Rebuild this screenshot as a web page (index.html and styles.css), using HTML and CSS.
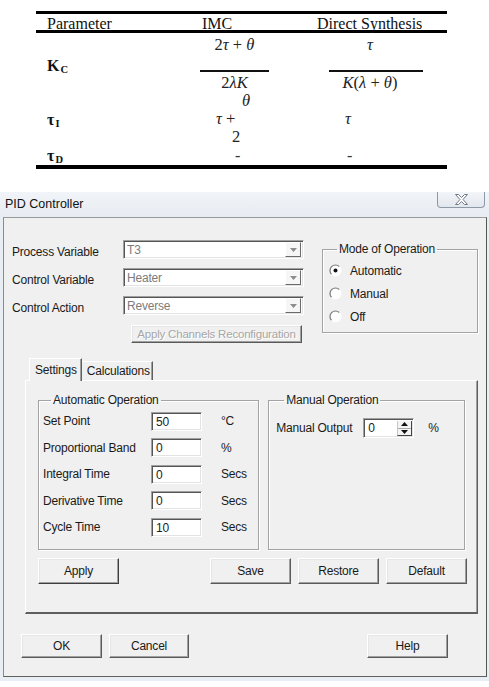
FILE: index.html
```html
<!DOCTYPE html>
<html lang="en">
<head>
<meta charset="utf-8">
<title>PID Controller tuning</title>
<link rel="stylesheet" href="styles.css">
</head>
<body>
<div class="page">

  <section class="tuning">
    <div class="tuning-table">
      <div class="tt-head">
        <div class="c1">Parameter</div>
        <div class="c2">IMC</div>
        <div class="c3">Direct Synthesis</div>
      </div>

      <div class="tt-row kc-row">
        <div class="c1"><span class="sym"><b>K</b><span class="sub">C</span></span></div>
        <div class="c2">
          <div class="frac imc-frac">
            <span class="num">2<i>τ</i> + <i>θ</i></span>
            <span class="bar"></span>
            <span class="den">2<i>λK</i></span>
          </div>
        </div>
        <div class="c3">
          <div class="frac ds-frac">
            <span class="num"><i>τ</i></span>
            <span class="bar"></span>
            <span class="den"><i>K</i>(<i>λ</i> + <i>θ</i>)</span>
          </div>
        </div>
      </div>

      <div class="tt-row ti-row">
        <div class="c1"><span class="sym"><b>τ</b><span class="sub">I</span></span></div>
        <div class="c2 stack">
          <span class="ln theta"><i>θ</i></span>
          <span class="ln tauplus"><i>τ</i> +</span>
          <span class="ln two">2</span>
        </div>
        <div class="c3"><span class="ln tau-ds"><i>τ</i></span></div>
      </div>

      <div class="tt-row td-row">
        <div class="c1"><span class="sym"><b>τ</b><span class="sub">D</span></span></div>
        <div class="c2"><span class="dash imc-dash">-</span></div>
        <div class="c3"><span class="dash ds-dash">-</span></div>
      </div>
    </div>
  </section>

  <div class="dialog">
    <div class="titlebar">
      <span class="title">PID Controller</span>
      <span class="close-btn">
        <svg width="13" height="11" viewBox="0 0 13 11"><path d="M0.5 0.5h3l3 3 3-3h3l-4.5 5 4.5 5h-3l-3-3-3 3h-3l4.5-5z" fill="#fff" stroke="#6f7a88" stroke-width="1" stroke-linejoin="round"/></svg>
      </span>
    </div>

    <div class="client">
      <div class="top-section">
        <div class="channels">
          <span class="lbl">Process Variable</span>
          <div class="combo"><span class="combo-text">T3</span><span class="combo-btn"><svg width="7" height="4" viewBox="0 0 7 4"><path d="M0 0h7L3.5 4z" fill="#8c8c8c"/></svg></span></div>
          <span class="lbl">Control Variable</span>
          <div class="combo"><span class="combo-text">Heater</span><span class="combo-btn"><svg width="7" height="4" viewBox="0 0 7 4"><path d="M0 0h7L3.5 4z" fill="#8c8c8c"/></svg></span></div>
          <span class="lbl">Control Action</span>
          <div class="combo"><span class="combo-text">Reverse</span><span class="combo-btn"><svg width="7" height="4" viewBox="0 0 7 4"><path d="M0 0h7L3.5 4z" fill="#8c8c8c"/></svg></span></div>
          <button class="btn btn-disabled reconfig">Apply Channels Reconfiguration</button>
        </div>

        <fieldset class="group mode-group">
          <legend>Mode of Operation</legend>
          <label class="radio">
            <svg width="13" height="13" viewBox="0 0 13 13"><circle cx="6.5" cy="6.5" r="5" fill="#fff"/><path d="M2.6 10.4A5.5 5.5 0 0 1 10.4 2.6" fill="none" stroke="#7a7a7a" stroke-width="1.2"/><path d="M10.4 2.6A5.5 5.5 0 0 1 2.6 10.4" fill="none" stroke="#fff" stroke-width="1.2"/><circle cx="6.5" cy="6.5" r="2" fill="#111"/></svg>
            <span>Automatic</span>
          </label>
          <label class="radio">
            <svg width="13" height="13" viewBox="0 0 13 13"><circle cx="6.5" cy="6.5" r="5" fill="#fff"/><path d="M2.6 10.4A5.5 5.5 0 0 1 10.4 2.6" fill="none" stroke="#7a7a7a" stroke-width="1.2"/><path d="M10.4 2.6A5.5 5.5 0 0 1 2.6 10.4" fill="none" stroke="#fff" stroke-width="1.2"/></svg>
            <span>Manual</span>
          </label>
          <label class="radio">
            <svg width="13" height="13" viewBox="0 0 13 13"><circle cx="6.5" cy="6.5" r="5" fill="#fff"/><path d="M2.6 10.4A5.5 5.5 0 0 1 10.4 2.6" fill="none" stroke="#7a7a7a" stroke-width="1.2"/><path d="M10.4 2.6A5.5 5.5 0 0 1 2.6 10.4" fill="none" stroke="#fff" stroke-width="1.2"/></svg>
            <span>Off</span>
          </label>
        </fieldset>
      </div>

      <div class="tabs">
        <div class="tab-strip">
          <span class="tab tab-active">Settings</span>
          <span class="tab">Calculations</span>
        </div>
        <div class="tab-panel">
          <div class="groups-row">
            <fieldset class="group auto-group">
              <legend>Automatic Operation</legend>
              <div class="param-grid">
                <span class="lbl">Set Point</span>
                <span class="field">50</span>
                <span class="unit">°C</span>

                <span class="lbl">Proportional Band</span>
                <span class="field">0</span>
                <span class="unit">%</span>

                <span class="lbl">Integral Time</span>
                <span class="field">0</span>
                <span class="unit">Secs</span>

                <span class="lbl">Derivative Time</span>
                <span class="field">0</span>
                <span class="unit">Secs</span>

                <span class="lbl">Cycle Time</span>
                <span class="field">10</span>
                <span class="unit">Secs</span>
              </div>
            </fieldset>

            <fieldset class="group manual-group">
              <legend>Manual Operation</legend>
              <div class="manual-row">
                <span class="lbl manual-lbl">Manual Output</span>
                <span class="spin">
                  <span class="spin-val">0</span>
                  <span class="spin-btns">
                    <span class="spin-half"><svg width="7" height="4" viewBox="0 0 7 4"><path d="M0 4L3.5 0 7 4z" fill="#111"/></svg></span>
                    <span class="spin-half"><svg width="7" height="4" viewBox="0 0 7 4"><path d="M0 0h7L3.5 4z" fill="#111"/></svg></span>
                  </span>
                </span>
                <span class="unit pct">%</span>
              </div>
            </fieldset>
          </div>

          <div class="action-row">
            <button class="btn btn-default">Apply</button>
            <button class="btn push-right">Save</button>
            <button class="btn">Restore</button>
            <button class="btn">Default</button>
          </div>
        </div>
      </div>

      <div class="footer">
        <button class="btn btn-footer">OK</button>
        <button class="btn btn-footer cancel">Cancel</button>
        <button class="btn btn-footer help">Help</button>
      </div>
    </div>
  </div>

</div>
</body>
</html>
```

FILE: styles.css
```css
* {
  box-sizing: border-box;
}

html,
body {
  margin: 0;
  padding: 0;
  background: #fff;
}

.page {
  width: 489px;
  height: 687px;
  overflow: hidden;
}

/* ---------- tuning rules table ---------- */

.tuning {
  padding: 11px 0 23px;
}

.tuning-table {
  width: 411px;
  margin-left: 36px;
  border-top: 3px solid #000;
  border-bottom: 4px solid #000;
  font-family: "Liberation Serif", "Times New Roman", serif;
  font-size: 16px;
  color: #111;
}

.tt-head,
.tt-row {
  display: grid;
  grid-template-columns: 132px 139px 140px;
}

.tt-head {
  height: 19px;
  line-height: 19px;
  border-bottom: 3px solid #000;
}

.tt-head .c1 { padding-left: 11px; }
.tt-head .c2 { padding-left: 34px; }
.tt-head .c3 { padding-left: 10px; }

.sym {
  display: inline-block;
  line-height: 18px;
  font-weight: bold;
}

.sym b {
  font-size: 16px;
}

.sym .sub {
  font-size: 10.5px;
  position: relative;
  top: 2px;
  margin-left: 1px;
}

.tt-row .c1 {
  padding-left: 11px;
}

.tt-row i {
  font-style: italic;
}

/* K_C row */
.kc-row {
  height: 59px;
}

.kc-row .c1 {
  padding-top: 24px;
}

.frac {
  display: flex;
  flex-direction: column;
  line-height: 16px;
  font-size: 16.5px;
  color: #222;
}

.frac .num {
  margin-top: 4px;
  text-align: center;
}

.frac .bar {
  height: 2px;
  margin-top: 17px;
  background: #111;
}

.frac .den {
  margin-top: 3px;
  text-align: center;
}

.imc-frac {
  width: 69px;
  margin-left: 32px;
}

.ds-frac {
  width: 94px;
  margin-left: 22px;
}

.ds-frac .num,
.ds-frac .den {
  padding-right: 12px;
}

/* tau_I row */
.ti-row {
  height: 55px;
}

.ti-row .c1 {
  padding-top: 19px;
}

.stack {
  display: flex;
  flex-direction: column;
}

.ln {
  display: block;
  line-height: 18px;
  font-size: 16.5px;
  color: #222;
}

.theta { padding-left: 74px; }
.tauplus { padding-left: 48px; }
.two { padding-left: 64px; }

.tau-ds {
  padding-top: 18px;
  padding-left: 38px;
}

/* tau_D row */
.td-row {
  height: 18px;
  line-height: 18px;
}

.dash {
  display: block;
  color: #333;
}

.imc-dash { padding-left: 67px; }
.ds-dash { padding-left: 40px; }

/* ---------- dialog window ---------- */

.dialog {
  width: 489px;
  padding: 0 2px 4px 3px;
  background: #e9eef4;
  font-family: "Liberation Sans", Arial, sans-serif;
  font-size: 12px;
  letter-spacing: -0.2px;
  color: #1a1a1a;
}

.titlebar {
  height: 25px;
  display: flex;
  align-items: center;
  background: linear-gradient(#f1f4f8, #e7ecf2);
  margin-left: -3px;
  margin-right: -2px;
  padding-left: 5px;
}

.title {
  font-size: 12.5px;
  letter-spacing: 0;
  color: #111;
  padding-bottom: 1px;
}

.close-btn {
  align-self: flex-start;
  margin-left: auto;
  margin-right: 4px;
  width: 48px;
  height: 16px;
  display: flex;
  align-items: center;
  justify-content: center;
  border: 1px solid #8e99a8;
  border-top: none;
  border-radius: 0 0 4px 4px;
  background: linear-gradient(#f3f5f8, #e2e7ee);
}

.client {
  height: 460px;
  border: 1px solid;
  border-color: #9a9a9a #4f5a4f #606060 #8a8a8a;
  background: #f0f0f0;
  padding: 22px 0 0 8px;
}

button {
  font: inherit;
  letter-spacing: inherit;
  color: inherit;
  margin: 0;
  padding: 0;
}

/* classic raised push button */
.btn {
  width: 81px;
  height: 26px;
  background: #f0f0f0;
  border: 1px solid;
  border-color: #fff #5a5a5a #5a5a5a #fff;
  box-shadow: inset -1px -1px 0 #a0a0a0, inset 1px 1px 0 #e6e6e6;
  text-align: center;
}

.btn-default {
  border-color: #fff #3f3f3f #3f3f3f #fff;
}

.btn-disabled {
  color: #a6a6a6;
  text-shadow: 1px 1px 0 #fff;
}

/* sunken edit fields */
.combo,
.field,
.spin {
  background: #fff;
  border: 1px solid;
  border-color: #a0a0a0 #fff #fff #a0a0a0;
  box-shadow: inset 1px 1px 0 #555, inset -1px -1px 0 #e3e3e3;
}

.top-section {
  display: flex;
  align-items: flex-start;
}

.channels {
  display: grid;
  grid-template-columns: 111px 181px;
  grid-auto-rows: 19px;
  row-gap: 9px;
  align-items: center;
}

.channels .lbl {
  padding-top: 5px;
}

.combo {
  height: 19px;
  display: flex;
  align-items: center;
  padding: 2px 2px 2px 3px;
}

.combo-text {
  flex: 1;
  color: #7c7c7c;
  padding-top: 1px;
}

.combo-btn {
  width: 16px;
  height: 15px;
  display: flex;
  align-items: center;
  justify-content: center;
  background: #f6f6f6;
  border-right: 1px solid #6a6a6a;
  border-bottom: 1px solid #6a6a6a;
  border-left: 1px solid #fff;
  border-top: 1px solid #fff;
}

.reconfig {
  grid-column: 2;
  width: 171px;
  height: 18px;
  margin-left: 8px;
  font-size: 11.5px;
}

/* group boxes */
.group {
  margin: 0;
  min-width: 0;
  border: 1px solid #a3a3a3;
  box-shadow: 1px 1px 0 #fff, inset 1px 1px 0 #fff;
}

.group legend {
  padding: 0 2px;
  margin-left: 8px;
  line-height: 14px;
  height: 14px;
}

.mode-group {
  width: 156px;
  margin-left: 18px;
  margin-top: 2px;
  padding: 3px 4px 4px 6px;
}

.radio {
  display: flex;
  align-items: center;
  height: 23px;
  gap: 8px;
}

.radio svg {
  flex: none;
}

/* tab control */
.tabs {
  margin: 15px 8px 0 13px;
}

.tab-strip {
  display: flex;
  align-items: flex-end;
  height: 22px;
  padding-left: 4px;
  position: relative;
  z-index: 1;
}

.tab {
  display: flex;
  align-items: center;
  height: 19px;
  padding: 0 2px 0 5px;
  border-top: 1px solid #fff;
  border-left: 1px solid #fff;
  border-right: 1px solid #5f5f5f;
  box-shadow: inset -1px 0 0 #a0a0a0;
  background: #f0f0f0;
}

.tab-active {
  height: 23px;
  margin-bottom: -1px;
  padding: 0 4px 1px 5px;
}

.tab + .tab {
  border-left: none;
}

.tab-panel {
  height: 234px;
  border: 1px solid;
  border-color: #fff #5f5f5f #5f5f5f #fff;
  border-bottom-width: 2px;
  box-shadow: inset -1px 0 0 #a0a0a0;
  padding: 12px 12px 0 12px;
}

.groups-row {
  display: flex;
  gap: 9px;
  height: 157px;
}

.auto-group {
  width: 226px;
  padding: 1px 4px 8px 4px;
}

.param-grid {
  display: grid;
  grid-template-columns: 108px 51px auto;
  grid-auto-rows: 26.5px;
  align-items: center;
}

.field {
  height: 19px;
  padding: 2px 0 0 4px;
  line-height: 14px;
  color: #222;
}

.unit {
  margin-left: 19px;
}

.manual-group {
  width: 201px;
  padding: 8px 4px 4px 7px;
}

.manual-row {
  display: flex;
  align-items: center;
  height: 26px;
}

.manual-lbl {
  width: 87px;
}

.spin {
  width: 51px;
  height: 20px;
  display: flex;
  padding: 2px 1px 1px 2px;
}

.spin-val {
  flex: 1;
  padding-left: 2px;
  line-height: 14px;
}

.spin-btns {
  width: 15px;
  display: flex;
  flex-direction: column;
  border-left: 1px solid #c8c8c8;
  background: #f4f4f4;
  border-right: 1px solid #444;
  border-bottom: 1px solid #444;
}

.spin-half {
  flex: 1;
  display: flex;
  align-items: center;
  justify-content: center;
}

.spin-half + .spin-half {
  border-top: 1px solid #aaa;
}

.pct {
  margin-left: 14px;
}

.action-row {
  display: flex;
  gap: 7px;
  margin-top: 8px;
  margin-right: -2px;
}

.push-right {
  margin-left: auto;
}

.footer {
  display: flex;
  margin-top: 20px;
  padding-left: 9px;
  padding-right: 38px;
}

.btn-footer {
  height: 24px;
}

.cancel {
  width: 80px;
  margin-left: 7px;
}

.help {
  margin-left: auto;
}
```
